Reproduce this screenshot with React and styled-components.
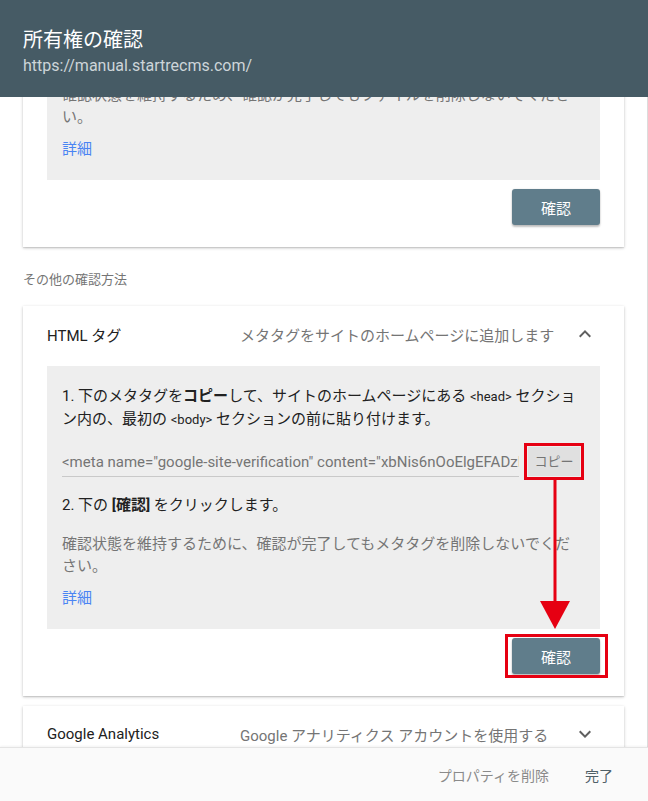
import React, {useLayoutEffect, useRef} from 'react'
import styled, {createGlobalStyle} from 'styled-components'

const GlobalStyle = createGlobalStyle`
  html, body {
    margin: 0;
    padding: 0;
    background: #fff;
  }
  body {
    font-family: Roboto, "Noto Sans CJK JP", "Noto Sans", sans-serif;
    color: #212121;
  }
`

const Dialog = styled.div`
  display: flex;
  flex-direction: column;
  width: 648px;
  height: 801px;
  overflow: hidden;
`

const Header = styled.header`
  position: relative;
  z-index: 2;
  flex: 0 0 auto;
  height: 97px;
  box-sizing: border-box;
  padding: 26px 23px 0;
  background: #465b65;
  color: #fff;
`

const Title = styled.h1`
  margin: 0;
  font-size: 20px;
  font-weight: 400;
  line-height: 28px;
`

const Url = styled.div`
  margin-top: 2px;
  font-size: 16px;
  line-height: 20px;
  color: #cdd5d9;
`

const Body = styled.main`
  flex: 1 1 auto;
  overflow: hidden;
  border-right: 1px solid #dcdcdc;
`

const Card = styled.section`
  position: relative;
  margin: 0 23px ${p => (p.$last ? '0' : '10px')};
  background: #fff;
  box-shadow: 0 1px 3px rgba(0, 0, 0, 0.22), 0 1px 1px rgba(0, 0, 0, 0.08);
  padding-bottom: ${p => (p.$open ? '22px' : '0')};
`

const CardHead = styled.div`
  display: grid;
  grid-template-columns: 193px 1fr auto;
  align-items: center;
  height: 56px;
  margin-bottom: 4px;
  padding: 0 27px 0 24px;
  font-size: 15px;
`

const Method = styled.div`
  color: #212121;
`

const MethodDesc = styled.div`
  color: #757575;
`

const Steps = styled.div`
  margin: 0 24px;
  padding: 19px 20px 20px 15px;
  background: #eeeeee;
  font-size: 15px;
  line-height: 22px;
`

const Para = styled.p`
  margin: ${p => (p.$gap ? '17px' : '0')} 0 0;
  color: ${p => (p.$muted ? '#757575' : '#212121')};
`

const Tag = styled.span`
  font-size: 13px;
`

const Link = styled.a`
  display: inline-block;
  margin-top: 10px;
  color: #4a84f3;
  text-decoration: none;
`

const CodeRow = styled.div`
  display: flex;
  align-items: flex-end;
  gap: 9px;
  margin-top: 16px;
`

const CodeField = styled.div`
  flex: 1 1 auto;
  min-width: 0;
  height: 29px;
  box-sizing: border-box;
  padding-top: 3px;
  border-bottom: 1px solid #c9c9c9;
  color: #757575;
  font-size: 15px;
  line-height: 22px;
  white-space: nowrap;
  overflow: hidden;
`

const CopyButton = styled.button`
  flex: 0 0 auto;
  width: 52px;
  height: 29px;
  margin-bottom: 1px;
  padding: 0;
  border: 0;
  background: #e0e0e0;
  color: #757575;
  font: inherit;
  font-size: 13px;
  outline: 3px solid #e60012;
  outline-offset: 1px;
`

const Actions = styled.div`
  display: flex;
  justify-content: flex-end;
  margin: 9px 24px 0;
`

const ConfirmWrap = styled.div`
  position: relative;
`

const Highlight = styled.div`
  position: absolute;
  top: -4px;
  bottom: -4px;
  left: -7px;
  right: -8px;
  border: 3px solid #e60012;
  pointer-events: none;
`

const ConfirmButton = styled.button`
  display: block;
  width: 88px;
  height: 36px;
  border: 0;
  border-radius: 3px;
  background: #607d8b;
  color: #fff;
  font: inherit;
  font-size: 15px;
  box-shadow: 0 2px 2px rgba(0, 0, 0, 0.24), 0 0 2px rgba(0, 0, 0, 0.12);
`

const Arrow = styled.svg`
  position: absolute;
  left: 516px;
  top: 172px;
  pointer-events: none;
`

const SectionLabel = styled.div`
  margin: 25px 23px 18px;
  font-size: 13px;
  line-height: 16px;
  color: #757575;
`

const Footer = styled.footer`
  position: relative;
  z-index: 2;
  flex: 0 0 53px;
  display: flex;
  align-items: center;
  justify-content: flex-end;
  gap: 36px;
  padding-right: 35px;
  background: #fafafa;
  border-top: 1px solid #e4e4e4;
  box-shadow: 0 -1px 2px rgba(0, 0, 0, 0.05);
`

const FooterButton = styled.button`
  padding: 0;
  border: 0;
  background: none;
  font: inherit;
  font-size: 14px;
  color: ${p => (p.$primary ? '#4f6068' : '#8a8a8a')};
`

const Chevron = ({up}) => (
  <svg width="24" height="24" viewBox="0 0 24 24" fill="#5f5f5f">
    {up ? (
      <path d="M12 8l-6 6 1.41 1.41L12 10.83l4.59 4.58L18 14z" />
    ) : (
      <path d="M16.59 8.59L12 13.17 7.41 8.59 6 10l6 6 6-6z" />
    )}
  </svg>
)

export default function App() {
  const bodyRef = useRef(null)
  const firstCard = useRef(null)

  // the dialog is scrolled a bit: first card's bottom sits just under the header
  useLayoutEffect(() => {
    const card = firstCard.current
    const body = bodyRef.current
    if (!card || !body) return
    body.scrollTop = card.offsetTop + card.offsetHeight - body.offsetTop - 150
  }, [])

  return (
    <Dialog>
      <GlobalStyle />
      <Header>
        <Title>所有権の確認</Title>
        <Url>https://manual.startrecms.com/</Url>
      </Header>

      <Body ref={bodyRef}>
        <Card $open ref={firstCard}>
          <CardHead>
            <Method>HTML ファイル</Method>
            <MethodDesc>HTML ファイルをサイトにアップロードします</MethodDesc>
            <Chevron up />
          </CardHead>
          <Steps>
            <Para>1. ファイルをダウンロードします。</Para>
            <Para $gap>2. ファイルをサイトにアップロードします。</Para>
            <Para $gap>3. 下の [確認] をクリックします。</Para>
            <Para $gap $muted>
              確認状態を維持するため、確認が完了してもファイルを削除しないでください。
            </Para>
            <Link href="#">詳細</Link>
          </Steps>
          <Actions>
            <ConfirmButton>確認</ConfirmButton>
          </Actions>
        </Card>

        <SectionLabel>その他の確認方法</SectionLabel>

        <Card $open>
          <CardHead>
            <Method>HTML タグ</Method>
            <MethodDesc>メタタグをサイトのホームページに追加します</MethodDesc>
            <Chevron up />
          </CardHead>
          <Steps>
            <Para>
              1. 下のメタタグを<b>コピー</b>して、サイトのホームページにある <Tag>&lt;head&gt;</Tag> セクション内の、最初の <Tag>&lt;body&gt;</Tag> セクションの前に貼り付けます。
            </Para>
            <CodeRow>
              <CodeField>
                &lt;meta name="google-site-verification" content="xbNis6nOoElgEFADzKq3vY" /&gt;
              </CodeField>
              <CopyButton>コピー</CopyButton>
            </CodeRow>
            <Para $gap>
              2. 下の <b>[確認]</b> をクリックします。
            </Para>
            <Para $gap $muted>
              確認状態を維持するために、確認が完了してもメタタグを削除しないでください。
            </Para>
            <Link href="#">詳細</Link>
          </Steps>
          <Actions>
            <ConfirmWrap>
              <ConfirmButton>確認</ConfirmButton>
              <Highlight />
            </ConfirmWrap>
          </Actions>
          <Arrow width="32" height="152" viewBox="0 0 32 152">
            <rect x="14.5" y="0" width="3" height="126" fill="#e60012" />
            <polygon points="1,123 31,123 16,151" fill="#e60012" />
          </Arrow>
        </Card>

        <Card $last>
          <CardHead>
            <Method>Google Analytics</Method>
            <MethodDesc>Google アナリティクス アカウントを使用する</MethodDesc>
            <Chevron />
          </CardHead>
        </Card>
      </Body>

      <Footer>
        <FooterButton>プロパティを削除</FooterButton>
        <FooterButton $primary>完了</FooterButton>
      </Footer>
    </Dialog>
  )
}
